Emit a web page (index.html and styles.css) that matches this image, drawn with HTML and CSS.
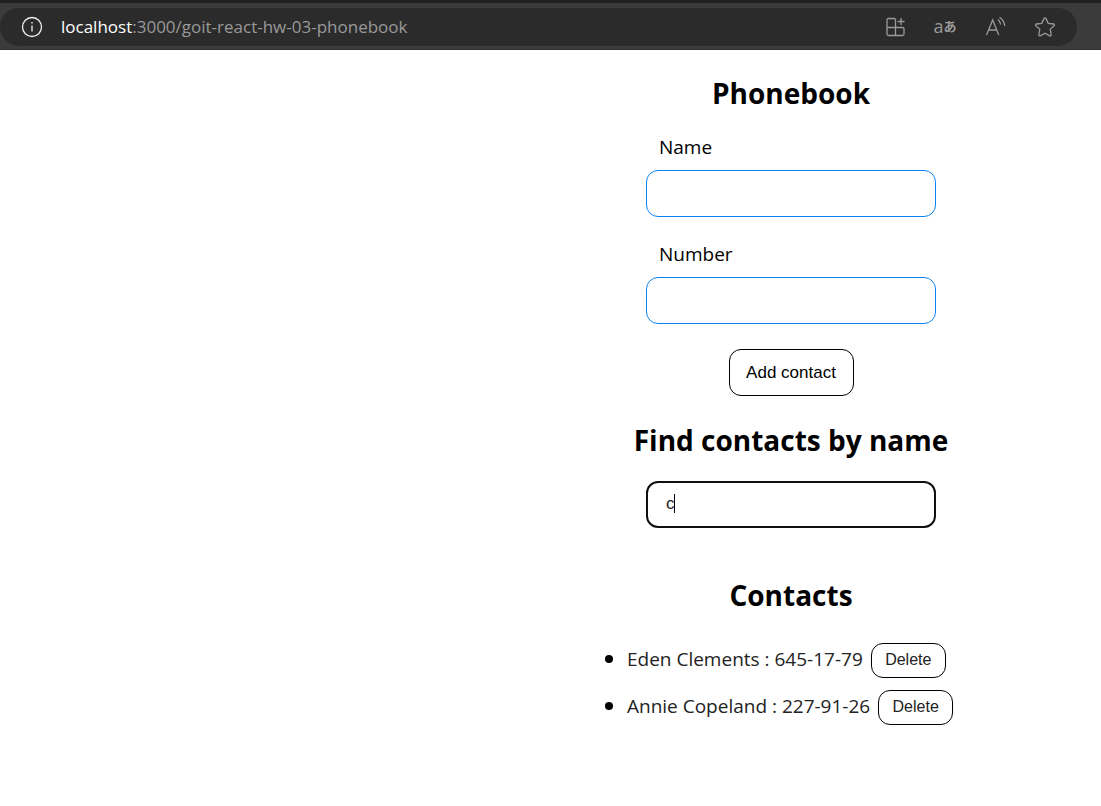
FILE: index.html
```html
<!DOCTYPE html>
<html lang="en">
<head>
<meta charset="utf-8">
<meta name="viewport" content="width=device-width, initial-scale=1">
<title>Phonebook</title>
<link rel="stylesheet" href="styles.css">
</head>
<body>
<header class="toolbar">
  <div class="address">
    <button class="icon-button" type="button" aria-label="Site information">
      <svg class="icon info" viewBox="0 0 22 22"><circle cx="11" cy="11" r="9.5"/><path d="M11 9.500v6M11 6v1.600"/></svg>
    </button>
    <div class="url"><span class="host">localhost</span>:3000/goit-react-hw-03-phonebook</div>
    <div class="actions">
      <button class="icon-button" type="button" aria-label="Apps">
        <svg class="icon" viewBox="0 0 22 22"><path d="M11 2.500H4.500a1.500 1.500 0 0 0-1.500 1.500v14a1.500 1.500 0 0 0 1.500 1.500h14a1.500 1.500 0 0 0 1.500-1.500v-5a1.500 1.500 0 0 0-1.500-1.500H3M11.500 2.500v17M17 2v7M13.500 5.500h7"/></svg>
      </button>
      <button class="icon-button translate" type="button" aria-label="Translate"><span class="latin">a</span><span class="kana">あ</span></button>
      <button class="icon-button" type="button" aria-label="Read aloud">
        <svg class="icon" viewBox="0 0 22 22"><path d="M2.500 19L8.700 4l6 15M4.500 14h8.400M14 3.500c1.500 1.300 2.400 3 2.600 5M15.500 1.300c3 2 4.800 5 5.300 8.700"/></svg>
      </button>
      <button class="icon-button" type="button" aria-label="Add to favorites">
        <svg class="icon" viewBox="0 0 22 22"><path d="M11 1.800c.4 0 .7.200.9.600l2.300 4.900 5.300.7c.9.100 1.200 1.100.6 1.700l-3.900 3.700 1 5.300c.2.900-.7 1.500-1.500 1.100L11 17.200l-4.700 2.600c-.8.400-1.700-.2-1.500-1.100l1-5.300-3.900-3.700c-.6-.6-.3-1.600.6-1.700l5.300-.7 2.300-4.900c.2-.4.5-.6.9-.6z"/></svg>
      </button>
    </div>
  </div>
</header>
<main class="page">
  <h1 class="title">Phonebook</h1>
  <form class="form">
    <label class="label" for="name">Name</label>
    <input class="field" id="name" name="name" type="text">
    <label class="label next" for="number">Number</label>
    <input class="field" id="number" name="number" type="tel">
    <button class="add" type="button">Add contact</button>
  </form>
  <h2 class="title find" id="find">Find contacts by name</h2>
  <div class="search">
    <input class="field active" type="text" value="c" aria-labelledby="find">
    <span class="caret"></span>
  </div>
  <h2 class="title contacts">Contacts</h2>
  <ul class="list">
    <li class="item"><span class="person">Eden Clements : 645-17-79</span><button class="delete" type="button">Delete</button></li>
    <li class="item"><span class="person">Annie Copeland : 227-91-26</span><button class="delete" type="button">Delete</button></li>
  </ul>
</main>
</body>
</html>
```
FILE: styles.css
```css
* { box-sizing: border-box; }

body {
  margin: 0;
  background: #fff;
  color: #000;
  font-family: "Open Sans", "Noto Sans", sans-serif;
  font-size: 19px;
  line-height: 26px;
}

.toolbar {
  padding: 5px 24px 3px 0;
  border-top: 3px solid #202020;
  border-bottom: 1px solid #303030;
  background: #3b3b3b;
}

.address {
  display: flex;
  align-items: center;
  height: 38px;
  padding: 0 21px;
  border-radius: 19px;
  background: #2b2b2b;
}

.icon-button {
  display: flex;
  align-items: center;
  justify-content: center;
  width: 22px;
  height: 22px;
  padding: 0;
  border: 0;
  background: none;
  color: #9a9a9a;
}

.icon {
  flex: none;
  width: 22px;
  height: 22px;
  fill: none;
  stroke: currentColor;
  stroke-width: 1.3;
}

.info { color: #f0f0f0; }

.url {
  flex: 1;
  margin-left: 18px;
  color: #999;
  font-size: 17px;
  white-space: nowrap;
}

.host { color: #fff; }

.actions { display: flex; gap: 28px; }

.translate { line-height: 20px; padding-bottom: 2px; }
.latin { font-family: "Open Sans", sans-serif; font-size: 18px; }
.kana { font-family: "Noto Sans CJK JP", sans-serif; font-size: 13px; font-weight: 700; }

.page {
  display: flex;
  flex-direction: column;
  align-items: center;
  padding: 24px 0 48px 481px;
}

.title {
  margin: 0 0 22px;
  font-size: 28px;
  font-weight: 700;
  line-height: 38px;
}

.form { display: flex; flex-direction: column; }

.label { margin: 0 0 10px 13px; }
.next { margin-top: 24px; }

.field {
  width: 290px;
  height: 47px;
  padding: 0 19px;
  border: 1px solid #0a84f5;
  border-radius: 12px;
  background: #fff;
  color: #222;
  font-family: "Liberation Sans", Arial, sans-serif;
  font-size: 17px;
}

.add {
  align-self: center;
  width: 125px;
  height: 47px;
  margin-top: 25px;
  padding: 0;
  border: 1px solid #000;
  border-radius: 12px;
  background: #fff;
  color: #000;
  font-family: "Liberation Sans", Arial, sans-serif;
  font-size: 17px;
}

.find { margin-top: 25px; }

.search { position: relative; }

.active { display: block; padding: 0 18px 2px; border: 2px solid #101010; }

.caret {
  position: absolute;
  top: 13px;
  left: 28px;
  width: 1px;
  height: 19px;
  background: #000;
}

.contacts { margin: 48px 0 29px; }

.list {
  display: flex;
  flex-direction: column;
  gap: 12px;
  width: 408px;
  margin: 0;
  padding: 0 0 0 18px;
  list-style: none;
}

.item { display: flex; align-items: center; }

.item::before {
  content: "";
  width: 8px;
  height: 8px;
  margin: 0 14px 4px 0;
  border-radius: 50%;
  background: #000;
}

.person { margin-right: 8px; padding-bottom: 3px; color: #222; }

.delete {
  width: 75px;
  height: 35px;
  padding: 0 0 2px;
  border: 1px solid #000;
  border-radius: 12px;
  background: #fff;
  color: #222;
  font-family: "Liberation Sans", Arial, sans-serif;
  font-size: 16px;
}
```
